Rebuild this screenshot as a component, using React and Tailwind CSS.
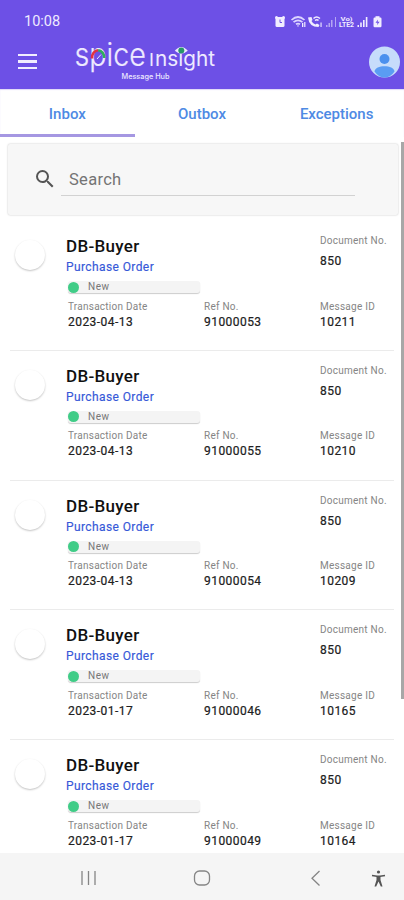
import React from "react";

const messages = [
  { date: "2023-04-13", refNo: "91000053", id: "10211" },
  { date: "2023-04-13", refNo: "91000055", id: "10210" },
  { date: "2023-04-13", refNo: "91000054", id: "10209" },
  { date: "2023-01-17", refNo: "91000046", id: "10165" },
  { date: "2023-01-17", refNo: "91000049", id: "10164" },
];

function StatusIcons() {
  return (
    <svg width="110" height="14" viewBox="0 0 110 14" className="mt-[14.5px]" fill="#f1edff">
      {/* alarm */}
      <rect x="1.5" y="2" width="9" height="10" rx="1.5" />
      <circle cx="2.5" cy="2.5" r="1.5" />
      <circle cx="9.5" cy="2.5" r="1.5" />
      <path d="M6 4.5V7.5H8" stroke="#6d50e6" fill="none" />
      {/* wifi */}
      <g fill="none" stroke="#dcd4ff" strokeWidth="1.7">
        <path d="M17.5 5Q24 -1 30.500 5M19.500 7.2Q24 3.5 28.500 7.2M22 9.3Q24 7.8 26 9.3" />
      </g>
      <path d="M23 10.5H25L24 12ZM28 8H29.3V12H28ZM30.2 7H31.4V12H30.2Z" />
      {/* wifi call */}
      <path d="M34 2.5L37.500 2L38.5 5L37.5 6Q39 9 41.5 9.5L43 8.5L45.5 10L44.5 12Q35 12 34 2.5Z" />
      <path d="M39.5 3.5Q42.5 .5 46 3.5M41 5.5Q43 4 44.5 5.5" fill="none" stroke="#f1edff" strokeWidth="1.5" />
      <rect x="46.5" y="7.5" width="1.1" height="4.5" />
      {/* first sim */}
      <g opacity=".55">
        <rect x="52" y="10" width="1.5" height="2" />
        <rect x="54.5" y="8" width="1.5" height="4" />
        <rect x="57" y="5" width="1.5" height="7" />
        <rect x="61" y="2" width="1" height="10" />
      </g>
      <text x="66.5" y="6.3" fontSize="6" fontWeight="700" textLength="12" lengthAdjust="spacingAndGlyphs" fontFamily="Roboto, sans-serif">Vo)</text>
      <text x="65" y="12.3" fontSize="6.500" fontWeight="700" textLength="15" lengthAdjust="spacingAndGlyphs" fontFamily="Roboto, sans-serif">LTE2</text>
      {/* second sim */}
      <rect x="83.5" y="10" width="1.5" height="2" />
      <rect x="86.2" y="7.5" width="1.6" height="4.5" />
      <rect x="89" y="5" width="1.6" height="7" />
      <rect x="91.8" y="2" width="1.6" height="10" />
      {/* battery */}
      <rect x="101.5" y="1.2" width="4" height="2" />
      <rect x="99.5" y="2.6" width="8" height="9.6" rx="1.2" />
      <path d="M104 4.5L101.5 7.8H103.5L103 10.3L105.6 6.8H103.7Z" fill="#6d50e6" />
    </svg>
  );
}

function Logo() {
  return (
    <svg width="150" height="44" viewBox="72 40 150 44" className="ml-[35px] overflow-visible" fill="#eeeaff" fontFamily="Inter, sans-serif">
      <text x="74.500" y="65.8" fontSize="31.500" fontWeight="300" textLength="71.500" lengthAdjust="spacingAndGlyphs" stroke="#eeeaff" strokeWidth="0.2">spice</text>
      <path d="M92 58.5A6.200 7.500 0 0 1 98.200 50.200" fill="none" stroke="#e2333f" strokeWidth="2.6" />
      <path d="M98.200 50.200A6.200 7.500 0 0 1 104.200 58" fill="none" stroke="#2fae5c" strokeWidth="2.6" />
      <path d="M97 59L101 54.500" stroke="#eeeaff" strokeWidth="1" />
      <text x="149" y="66" fontSize="17" textLength="5" lengthAdjust="spacingAndGlyphs">I</text>
      <text x="155" y="66" fontSize="20.500" textLength="60" lengthAdjust="spacingAndGlyphs">nsight</text>
      <path d="M174.800 50.800Q181.300 43 187.800 50.800Q181.300 56.500 174.800 50.800Z" />
      <circle cx="181.300" cy="50.400" r="3" fill="#27966a" />
      <text x="121.500" y="78.800" fontSize="7" fontWeight="500" textLength="48" lengthAdjust="spacingAndGlyphs">Message Hub</text>
    </svg>
  );
}

function Field({ label, value }) {
  return (
    <div>
      <div className="h-[15px] whitespace-nowrap text-[10px] leading-[15px] tracking-[0.25px] text-[#858585]">{label}</div>
      <div className="h-[16px] text-[12px] leading-[16px] tracking-[0.45px] text-[#202020] [-webkit-text-stroke:0.2px]">{value}</div>
    </div>
  );
}

function MessageRow({ message }) {
  return (
    <div className="mx-[10px] h-[129.75px] shrink-0 border-b border-[#ebebeb] pt-[12px]">
      <div className="flex h-[65.500px]">
        <div className="ml-[5px] mt-[7px] size-[30px] rounded-full bg-white shadow-[0_1px_2px_rgba(0,0,0,0.24)]" />
        <div className="ml-[21px] w-[254px]">
          <div className="mt-[3px] h-[21px] text-[17px] font-medium leading-[21px] tracking-[0.3px] text-[#111]">DB-Buyer</div>
          <div className="h-[20px] text-[12px] leading-[20px] tracking-[0.4px] text-[#3658d8] [-webkit-text-stroke:0.15px]">Purchase Order</div>
          <div className="ml-[2px] mt-[4px] flex h-[12px] w-[132px] items-center rounded-[3px] bg-[#f4f4f4] shadow-[0_1px_1px_rgba(0,0,0,0.2)]">
            <span className="size-[11px] rounded-full bg-[#40cc87]" />
            <span className="ml-[9px] text-[10px] leading-[12px] tracking-[0.5px] text-[#777]">New</span>
          </div>
        </div>
        <div className="-mt-px">
          <div className="h-[18px] whitespace-nowrap text-[10px] leading-[18px] tracking-[0.25px] text-[#858585]">Document No.</div>
          <div className="h-[21px] text-[12px] leading-[22px] tracking-[0.45px] text-[#202020] [-webkit-text-stroke:0.2px]">850</div>
        </div>
      </div>
      <div className="grid grid-cols-[136px_116px_70px] pl-[58px]">
        <Field label="Transaction Date" value={message.date} />
        <Field label="Ref No." value={message.refNo} />
        <Field label="Message ID" value={message.id} />
      </div>
    </div>
  );
}

export default function App() {
  return (
    <div className="flex h-[900px] w-[404px] flex-col overflow-hidden bg-white font-['Roboto',sans-serif]">
      <header className="h-[89px] shrink-0 bg-[#6d50e6]">
        <div className="flex h-[40px] justify-between pl-[24px] pr-[20px]">
          <span className="mt-[12px] text-[14.500px] leading-[20px] text-[#eeeaff]">10:08</span>
          <StatusIcons />
        </div>
        <div className="flex h-[44px] items-start">
          <div className="ml-[18px] mt-[14px] flex w-[19px] flex-col gap-[4px]">
            <span className="h-[2.3px] bg-[#f1edff]" />
            <span className="h-[2.3px] bg-[#f1edff]" />
            <span className="h-[2.3px] bg-[#f1edff]" />
          </div>
          <Logo />
          <svg width="32" height="32" viewBox="0 0 32 32" className="ml-[147px] mt-[6px] shrink-0">
            <circle cx="15.500" cy="16" r="15.500" fill="#c6dcfb" />
            <circle cx="15.500" cy="13" r="5" fill="#4b90ee" />
            <path d="M5.500 25.500C6 18.500 25 18.500 25.500 25.500Q21.500 31.500 15.500 31.500T5.500 25.500Z" fill="#5a9cf3" />
          </svg>
        </div>
      </header>

      <nav className="grid h-[48px] shrink-0 grid-cols-3 grid-rows-[48px] text-center text-[15px] font-medium leading-[50px] text-[#4e8ae4] shadow-[inset_0_1px_1px_#ded8f8]">
        <span className="h-[48px] border-b-[3px] border-[#a597e2]">Inbox</span>
        <span>Outbox</span>
        <span>Exceptions</span>
      </nav>

      <main className="relative flex min-h-0 grow flex-col overflow-hidden">
        <div className="ml-[8px] mt-[7px] h-[71px] w-[390px] shrink-0 rounded-[2px] bg-[#f7f7f7] shadow-[0_0_2px_rgba(0,0,0,0.25)]">
          <div className="flex pl-[25px] pt-[22px]">
            <svg width="24" height="24" viewBox="0 0 24 24" fill="#555" className="mt-px">
              <path d="M15.500 14h-.79l-.28-.27A6.470 6.470 0 0 0 16 9.500 6.500 6.500 0 1 0 9.500 16c1.610 0 3.090-.59 4.230-1.570l.27.28v.79l5 4.990L20.490 19l-4.990-5zm-6 0C7.010 14 5 11.990 5 9.500S7.010 5 9.500 5 14 7.010 14 9.500 11.990 14 9.500 14z" />
            </svg>
            <div className="ml-[4px] h-[30px] w-[294px] border-b border-[#d2d2d2] pl-[8px] text-[16.500px] leading-[27px] tracking-[0.3px] text-[#747474]">Search</div>
          </div>
        </div>
        <div className="mt-[6px] flex flex-col">
          {messages.map((message) => (
            <MessageRow key={message.id} message={message} />
          ))}
        </div>
        <div className="absolute right-0 top-[5px] h-[557px] w-[3px] bg-[#a7a7a7]" />
      </main>

      <footer className="flex h-[47px] shrink-0 items-center bg-[#f5f5f5] pt-[4px]">
        <svg width="404" height="24" viewBox="0 0 404 24" fill="none" stroke="#858585" strokeWidth="1.300">
          <path d="M82 4V18M88.500 4V18M95 4V18" />
          <rect x="194.500" y="4" width="15" height="14" rx="5" />
          <path d="M319.500 4L312 11.200L319.500 18.500" />
          <circle cx="378.500" cy="5" r="1.600" fill="#555" stroke="none" />
          <path d="M372 8.500L377 9.300H380L385 8.500" stroke="#555" strokeWidth="1.400" />
          <path d="M376.500 9H380.500V13L382.500 19.500H380.800L378.500 14.500L376.200 19.500H374.500L376.500 13Z" fill="#555" stroke="none" />
        </svg>
      </footer>
    </div>
  );
}
